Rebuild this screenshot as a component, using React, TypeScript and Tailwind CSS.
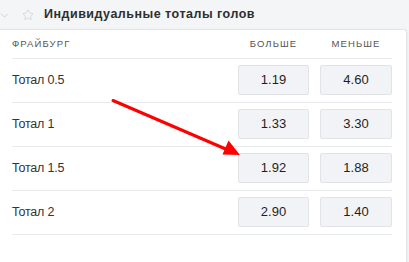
import { ChevronDown, Star } from "lucide-react";

const rows = [
  { label: "Тотал 0.5", over: "1.19", under: "4.60" },
  { label: "Тотал 1", over: "1.33", under: "3.30" },
  { label: "Тотал 1.5", over: "1.92", under: "1.88" },
  { label: "Тотал 2", over: "2.90", under: "1.40" },
];

function Odd({ value, wide }: { value: string; wide?: boolean }) {
  return (
    <div
      className={`${wide ? "w-[72px]" : "w-[71px]"} h-[30px] flex items-center justify-center bg-[#f2f3f6] border border-[#e2e3e7] rounded-[2px] text-[13px] text-[#1f1f1f]`}
    >
      {value}
    </div>
  );
}

export default function App() {
  return (
    <div
      className="relative w-[409px] h-[262px] overflow-hidden bg-[#f4f5f7]"
      style={{ fontFamily: '"Liberation Sans", Arial, sans-serif' }}
    >
      {/* section title */}
      <div className="h-[29px] flex items-center">
        <ChevronDown size={13} strokeWidth={1.5} className="text-[#c9cacf] -ml-[2px] mt-[1px]" />
        <Star size={12} strokeWidth={1.3} className="text-[#c9cacf] ml-[11px]" />
        <span className="ml-[10px] text-[12.5px] font-bold text-[#2e2e2e] tracking-[0.5px]">
          Индивидуальные тоталы голов
        </span>
      </div>

      {/* market card */}
      <div className="mr-[2px] h-[240px] bg-white border-t border-r border-[#e4e5e9] rounded-tr-[4px] shadow-[1px_0_2px_rgba(0,0,0,0.04)]">
        <div className="pl-[12px] pr-[14px]">
          <div className="h-[29px] flex items-center border-b border-[#e9eaed] text-[9.5px] tracking-[1.1px] text-[#555]">
            <div className="flex-1">ФРАЙБУРГ</div>
            <div className="w-[71px] text-center">БОЛЬШЕ</div>
            <div className="w-[11px]" />
            <div className="w-[72px] text-center">МЕНЬШЕ</div>
          </div>
          {rows.map((r) => (
            <div
              key={r.label}
              className="h-[44px] flex items-center border-b border-[#e9eaed]"
            >
              <div className="flex-1 text-[12.5px] tracking-[-0.2px] text-[#333]">{r.label}</div>
              <div className="flex gap-[11px] -mt-[1px]">
                <Odd value={r.over} />
                <Odd value={r.under} wide />
              </div>
            </div>
          ))}
        </div>
      </div>

      {/* annotation arrow */}
      <svg
        className="absolute left-0 top-0 pointer-events-none"
        width="409"
        height="262"
      >
        <line x1="113" y1="100.5" x2="228" y2="150" stroke="#f00" strokeWidth="3" strokeLinecap="round" />
        <polygon points="240,155 222.5,154.5 228.5,140.5" fill="#f00" />
      </svg>
    </div>
  );
}
